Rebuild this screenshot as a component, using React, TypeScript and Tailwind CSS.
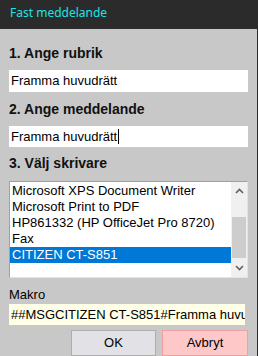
import React from "react";

const printers = [
    "Microsoft XPS Document Writer",
    "Microsoft Print to PDF",
    "HP861332 (HP OfficeJet Pro 8720)",
    "Fax",
    "CITIZEN CT-S851",
];

export default function App() {
    const selected = 4;

    return (
        <div className="w-[258px] h-[356px] overflow-hidden flex flex-col bg-[#c8c8c8] border-r border-[#2b2b2b] font-['Liberation_Sans',Arial,sans-serif] text-black">
            {/* title bar */}
            <div className="h-[29px] shrink-0 bg-[#2b2b2b] pl-[10px] pt-[5px] text-[12px] leading-[16px] text-[#1de4e8] font-['Noto_Sans',sans-serif]">
                Fast meddelande
            </div>

            <div className="flex flex-col pl-[9px] pr-[9px]">
                <h2 className="mt-[16px] text-[14px] leading-[16px] font-bold text-[#111]">1. Ange rubrik</h2>
                <div className="mt-[9px] h-[22px] bg-white pl-[2px] flex items-center text-[13px]">
                    Framma huvudrätt
                </div>

                <h2 className="mt-[9px] text-[14px] leading-[16px] font-bold text-[#111]">2. Ange meddelande</h2>
                <div className="mt-[9px] h-[21px] bg-white pl-[2px] flex items-center text-[13px]">
                    Framma huvudrätt
                    <span className="ml-[1px] w-px h-[15px] bg-black"/>
                </div>

                <h2 className="mt-[8px] text-[14px] leading-[16px] font-bold text-[#111]">3. Välj skrivare</h2>
                <div className="mt-[10px] h-[97px] flex bg-white border-t border-l border-[#a0a0a0] border-r border-b border-r-[#e3e3e3] border-b-[#e3e3e3]">
                    <div className="flex-1 flex flex-col pt-[1px] text-[13px] leading-[16px] overflow-hidden">
                        {printers.map((p, i) => (
                            <div
                                key={p}
                                className={i === selected ? "h-[16px] pl-[2px] bg-[#0078d7] text-white whitespace-nowrap" : "h-[16px] pl-[2px] whitespace-nowrap"}
                            >
                                {p}
                            </div>
                        ))}
                    </div>
                    {/* scrollbar */}
                    <div className="w-[16px] shrink-0 bg-[#f0f0f0] flex flex-col">
                        <div className="h-[17px] flex items-center justify-center">
                            <svg width="9" height="6" viewBox="0 0 9 6">
                                <path d="M1 5 L4.5 1.5 L8 5" stroke="#606060" strokeWidth="1.6" fill="none"/>
                            </svg>
                        </div>
                        <div className="h-[18px]"/>
                        <div className="h-[41px] mx-[1px] bg-[#cdcdcd]"/>
                        <div className="flex-1 flex items-center justify-center">
                            <svg width="9" height="6" viewBox="0 0 9 6">
                                <path d="M1 1 L4.5 4.5 L8 1" stroke="#606060" strokeWidth="1.6" fill="none"/>
                            </svg>
                        </div>
                    </div>
                </div>

                <div className="mt-[9px] text-[13px] leading-[15px]">Makro</div>
                <div className="mt-[2px] mr-[3px] h-[21px] bg-[#ffffe8] pl-[2px] flex items-center text-[13px] whitespace-nowrap overflow-hidden">
                    ##MSGCITIZEN CT-S851#Framma huvudrätt
                </div>

                <div className="mt-[5px] flex justify-end gap-[6px]">
                    <button className="w-[85px] h-[26px] bg-[#e1e1e6] border border-[#adadad] text-[13px]">
                        OK
                    </button>
                    <button className="w-[86px] h-[26px] bg-[#ffc8c8] border border-[#f0a0a0] text-[13px]">
                        Avbryt
                    </button>
                </div>
            </div>
        </div>
    );
}
